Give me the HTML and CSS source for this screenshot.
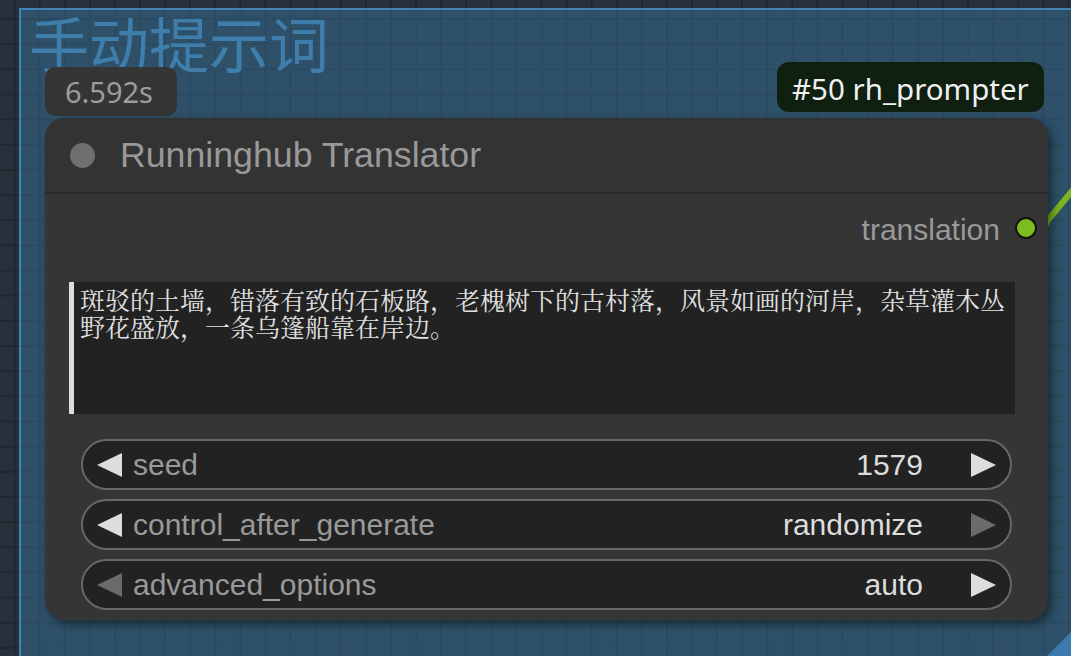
FILE: index.html
```
<!DOCTYPE html>
<html>
<head>
<meta charset="utf-8">
<link rel="stylesheet" href="styles.css">
</head>
<body>
<div class="canvas">
  <div class="group"><div class="group-title">手动提示词</div></div>
  <div class="group-handle"></div>
  <svg class="wire" width="1071" height="656" viewBox="0 0 1071 656">
    <path d="M1030 232 Q1044 232 1048 220 L1082 179" fill="none" stroke="#7bb524" stroke-width="6" stroke-linecap="round"/>
  </svg>
  <div class="badge-time">6.592s</div>
  <div class="badge-id">#50 rh_prompter</div>
  <div class="node">
    <div class="node-title">
      <span class="title-dot"></span>
      <span class="title-text">Runninghub Translator</span>
    </div>
    <div class="output-row">
      <span class="output-label">translation</span>
      <span class="output-dot"></span>
    </div>
    <div class="prompt">斑驳的土墙，错落有致的石板路，老槐树下的古村落，风景如画的河岸，杂草灌木丛野花盛放，一条乌篷船靠在岸边。</div>
    <div class="widgets">
      <div class="widget">
        <svg class="arrow" width="25" height="24" viewBox="0 0 25 24"><polygon points="25,0 25,24 0,12" class="on"/></svg>
        <span class="w-label">seed</span>
        <span class="w-value">1579</span>
        <svg class="arrow" width="25" height="24" viewBox="0 0 25 24"><polygon points="0,0 0,24 25,12" class="on"/></svg>
      </div>
      <div class="widget">
        <svg class="arrow" width="25" height="24" viewBox="0 0 25 24"><polygon points="25,0 25,24 0,12" class="on"/></svg>
        <span class="w-label">control_after_generate</span>
        <span class="w-value">randomize</span>
        <svg class="arrow" width="25" height="24" viewBox="0 0 25 24"><polygon points="0,0 0,24 25,12" class="off"/></svg>
      </div>
      <div class="widget">
        <svg class="arrow" width="25" height="24" viewBox="0 0 25 24"><polygon points="25,0 25,24 0,12" class="off"/></svg>
        <span class="w-label">advanced_options</span>
        <span class="w-value">auto</span>
        <svg class="arrow" width="25" height="24" viewBox="0 0 25 24"><polygon points="0,0 0,24 25,12" class="on"/></svg>
      </div>
    </div>
  </div>
</div>
</body>
</html>
```

FILE: styles.css
```
body {
  margin: 0;
  background: #27313b;
}

.canvas {
  position: relative;
  width: 1071px;
  height: 656px;
  overflow: hidden;
  background-color: #27313b;
  background-image:
    linear-gradient(to right, #1f272f 2px, transparent 2px),
    linear-gradient(to bottom, #1f272f 2px, transparent 2px);
  background-size: 25.1px 25.17px;
  background-position: 13.6px 18px;
}

.group {
  position: absolute;
  left: 19px;
  top: 8px;
  width: 1120px;
  height: 720px;
  box-sizing: border-box;
  border: 2px solid #4384b6;
  background: rgba(54, 112, 150, 0.5);
}

.group-title {
  font-family: "Noto Sans CJK SC", sans-serif;
  font-size: 60px;
  line-height: 60px;
  color: #3f7dab;
  padding: 2px 0 0 8px;
}

.group-handle {
  position: absolute;
  right: 0;
  bottom: 0;
  width: 24px;
  height: 24px;
  background: #3c7ab0;
  clip-path: polygon(100% 0, 100% 100%, 0 100%);
}

.wire {
  position: absolute;
  left: 0;
  top: 0;
}

.badge-time {
  position: absolute;
  left: 45px;
  top: 67px;
  width: 132px;
  height: 49px;
  box-sizing: border-box;
  padding-left: 20px;
  background: #353535;
  border-radius: 10px;
  font-family: "Noto Sans", sans-serif;
  font-size: 29px;
  line-height: 49px;
  color: #9c9c9c;
}

.badge-id {
  position: absolute;
  left: 777px;
  top: 62px;
  height: 50px;
  box-sizing: border-box;
  padding: 4px 15px 0;
  background: #0f1f10;
  border-radius: 12px;
  font-family: "Noto Sans", sans-serif;
  font-size: 29.5px;
  line-height: 46px;
  color: #f0f0f0;
  white-space: nowrap;
}

.node {
  position: absolute;
  left: 45px;
  top: 118px;
  width: 1003px;
  height: 502px;
  background: #353535;
  border-radius: 20px;
  box-shadow: 4px 4px 10px rgba(0, 0, 0, 0.45);
  display: flex;
  flex-direction: column;
  font-family: "Liberation Sans", Arial, sans-serif;
}

.node-title {
  height: 74px;
  flex: none;
  display: flex;
  align-items: center;
  gap: 25.5px;
  padding-left: 24.5px;
  background: #333333;
  border-radius: 20px 20px 0 0;
  border-bottom: 2px solid #2b2b2b;
}

.title-dot {
  width: 25px;
  height: 25px;
  border-radius: 50%;
  background: #6f6f6f;
}

.title-text {
  font-size: 35.7px;
  color: #999999;
}

.output-row {
  height: 72px;
  flex: none;
  display: flex;
  justify-content: flex-end;
  align-items: center;
  gap: 15px;
  padding-right: 11px;
}

.output-label {
  font-size: 30px;
  color: #999999;
}

.output-dot {
  width: 18px;
  height: 18px;
  border: 2px solid #111111;
  border-radius: 50%;
  background: #7cbc1f;
  margin-bottom: 5px;
}

.prompt {
  flex: none;
  margin: 16px 0 0 24px;
  width: 946px;
  height: 132px;
  box-sizing: border-box;
  border-left: 5px solid #dddddd;
  background: #222222;
  padding: 4px 6px;
  font-family: "Noto Serif CJK SC", "Noto Sans CJK SC", serif;
  font-size: 25px;
  line-height: 26.7px;
  color: #e0e0e0;
}

.widgets {
  flex: none;
  margin: 25px 36px 0;
  display: flex;
  flex-direction: column;
  gap: 9px;
}

.widget {
  height: 51px;
  box-sizing: border-box;
  border: 2px solid #676767;
  border-radius: 26px;
  background: #222222;
  display: flex;
  align-items: center;
  padding: 0 14px;
  font-size: 30px;
}

.arrow {
  flex: none;
  display: block;
}

.arrow .on {
  fill: #dddddd;
}

.arrow .off {
  fill: #6b6b6b;
}

.w-label {
  margin-left: 11px;
  color: #999999;
}

.w-value {
  flex: 1;
  text-align: right;
  margin-right: 48px;
  color: #dddddd;
}
```
